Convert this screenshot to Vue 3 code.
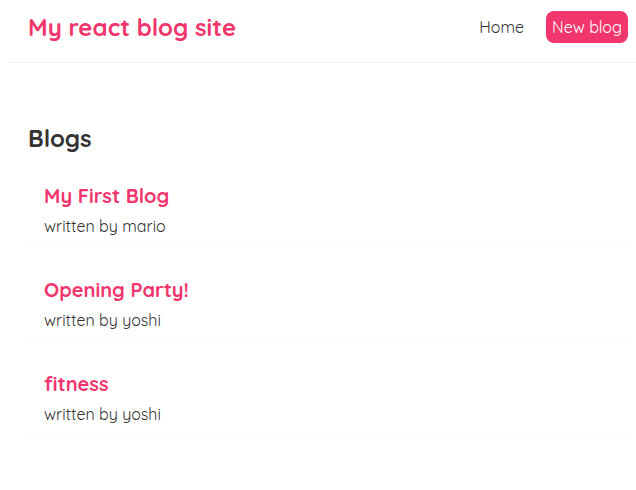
<script setup>
const blogs = [
  { id: 1, title: 'My First Blog', author: 'mario' },
  { id: 2, title: 'Opening Party!', author: 'yoshi' },
  { id: 3, title: 'fitness', author: 'yoshi' },
]
</script>

<template>
  <nav class="navbar">
    <h1>My react blog site</h1>
    <div class="links">
      <a href="#home">Home</a>
      <a href="#create" class="new-blog">New blog</a>
    </div>
  </nav>
  <main class="content">
    <h2>Blogs</h2>
    <article v-for="blog in blogs" :key="blog.id" class="preview">
      <a :href="'#blog-' + blog.id">
        <h3>{{ blog.title }}</h3>
        <p>written by {{ blog.author }}</p>
      </a>
    </article>
  </main>
</template>

<style>
body {
  background: #fff;
}
</style>

<style scoped>
.navbar,
.content {
  font-family: Quicksand, Lato, sans-serif;
  color: #333;
}
h1,
h2,
h3,
p {
  margin: 0;
}
a {
  color: inherit;
  text-decoration: none;
}
.navbar {
  display: flex;
  align-items: center;
  justify-content: space-between;
  margin-left: 8px;
  padding: 8px 8px 16px 20px;
  border-bottom: 1px solid #f2f2f2;
}
h1 {
  font-size: 24px;
  line-height: 38px;
  color: #f1356d;
}
.links {
  display: flex;
  align-items: center;
  gap: 16px;
  font-size: 16px;
  line-height: 20px;
}
.links a {
  padding: 6px;
}
.links .new-blog {
  color: #fff;
  background: #f1356d;
  border-radius: 8px;
}
.content {
  padding: 60px 8px 40px 28px;
}
h2 {
  font-size: 24px;
  line-height: 30px;
  margin-bottom: 20px;
}
.preview {
  padding: 10px 16px;
  margin-bottom: 20px;
  border-bottom: 1px solid #fafafa;
}
h3 {
  font-size: 20px;
  line-height: 25px;
  margin-bottom: 8px;
  color: #f1356d;
}
p {
  font-size: 16px;
  line-height: 20px;
}
</style>
